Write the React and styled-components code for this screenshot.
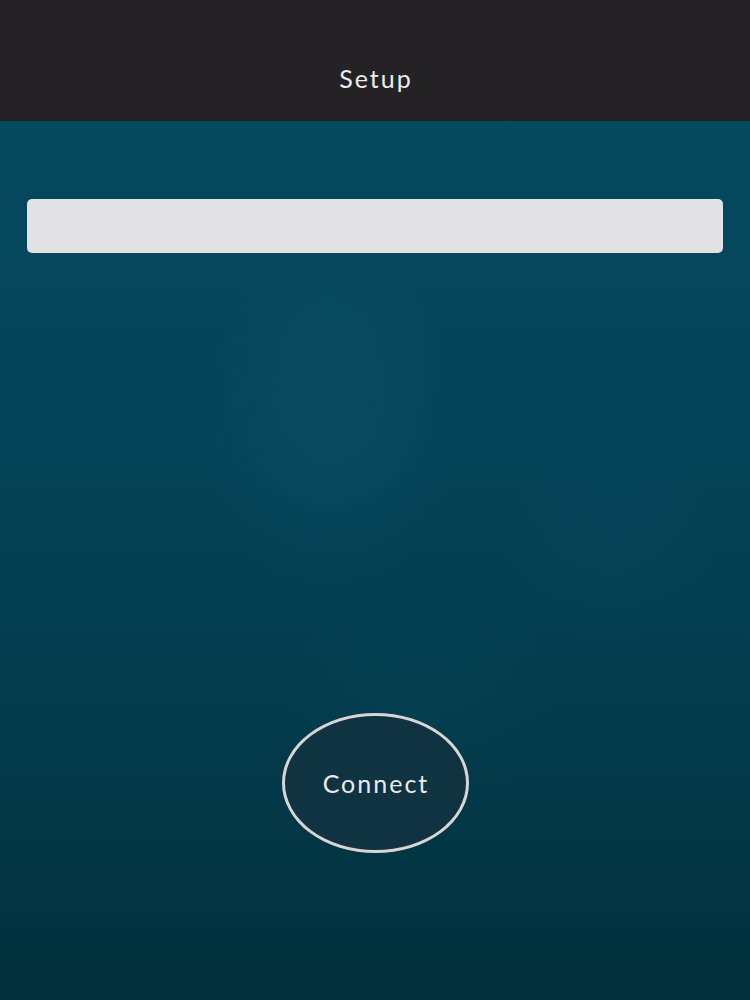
import React from 'react'
import styled, { createGlobalStyle } from 'styled-components'

const GlobalStyle = createGlobalStyle`
	html, body {
		margin: 0;
		padding: 0;
		height: 100%;
	}
	body {
		font-family: 'Lato', 'Noto Sans', sans-serif;
	}
`

const Screen = styled.div`
	display: flex;
	flex-direction: column;
	width: 750px;
	height: 1000px;
	overflow: hidden;
`

const Header = styled.header`
	display: flex;
	align-items: center;
	justify-content: center;
	height: 121px;
	padding-top: 34px;
	box-sizing: border-box;
	background-color: #242224;
`

const Title = styled.h1`
	margin: 0;
	padding-left: 2px;
	font: normal normal 400 25px 'Lato', 'Noto Sans', sans-serif;
	letter-spacing: 2px;
	color: #ecebee;
`

const Body = styled.main`
	flex: 1;
	display: flex;
	flex-direction: column;
	align-items: center;
	padding: 78px 27px 147px;
	box-sizing: border-box;
	background:
		radial-gradient(ellipse 180px 260px at 330px 300px, rgba(30, 110, 140, 0.16), transparent 70%),
		radial-gradient(ellipse 160px 140px at 610px 420px, rgba(30, 100, 130, 0.1), transparent 70%),
		radial-gradient(ellipse 200px 160px at 420px 580px, rgba(30, 100, 120, 0.08), transparent 70%),
		linear-gradient(180deg, #05495f 0%, #054459 35%, #033c4d 65%, #02303c 100%);
`

const Field = styled.input`
	width: 100%;
	height: 54px;
	border: none;
	border-radius: 5px;
	background-color: #e2e2e4;
	box-sizing: border-box;
	padding: 0 14px;
	font: normal normal 400 20px 'Lato', 'Noto Sans', sans-serif;
	outline: none;
`

const Spacer = styled.div`
	flex: 1;
`

const ConnectButton = styled.button`
	display: flex;
	align-items: center;
	justify-content: center;
	width: 187px;
	height: 140px;
	padding: 0 0 0 2px;
	border-radius: 50%;
	border: 3px solid #d9d5d5;
	background-color: #0f3340;
	box-sizing: border-box;
	color: #eceaec;
	font: normal normal 400 25px 'Lato', 'Noto Sans', sans-serif;
	letter-spacing: 2px;
	cursor: pointer;
`

const App = () => {
	return (
		<>
			<GlobalStyle />
			<Screen>
				<Header>
					<Title>Setup</Title>
				</Header>
				<Body>
					<Field type='text' />
					<Spacer />
					<ConnectButton>Connect</ConnectButton>
				</Body>
			</Screen>
		</>
	)
}

export default App
